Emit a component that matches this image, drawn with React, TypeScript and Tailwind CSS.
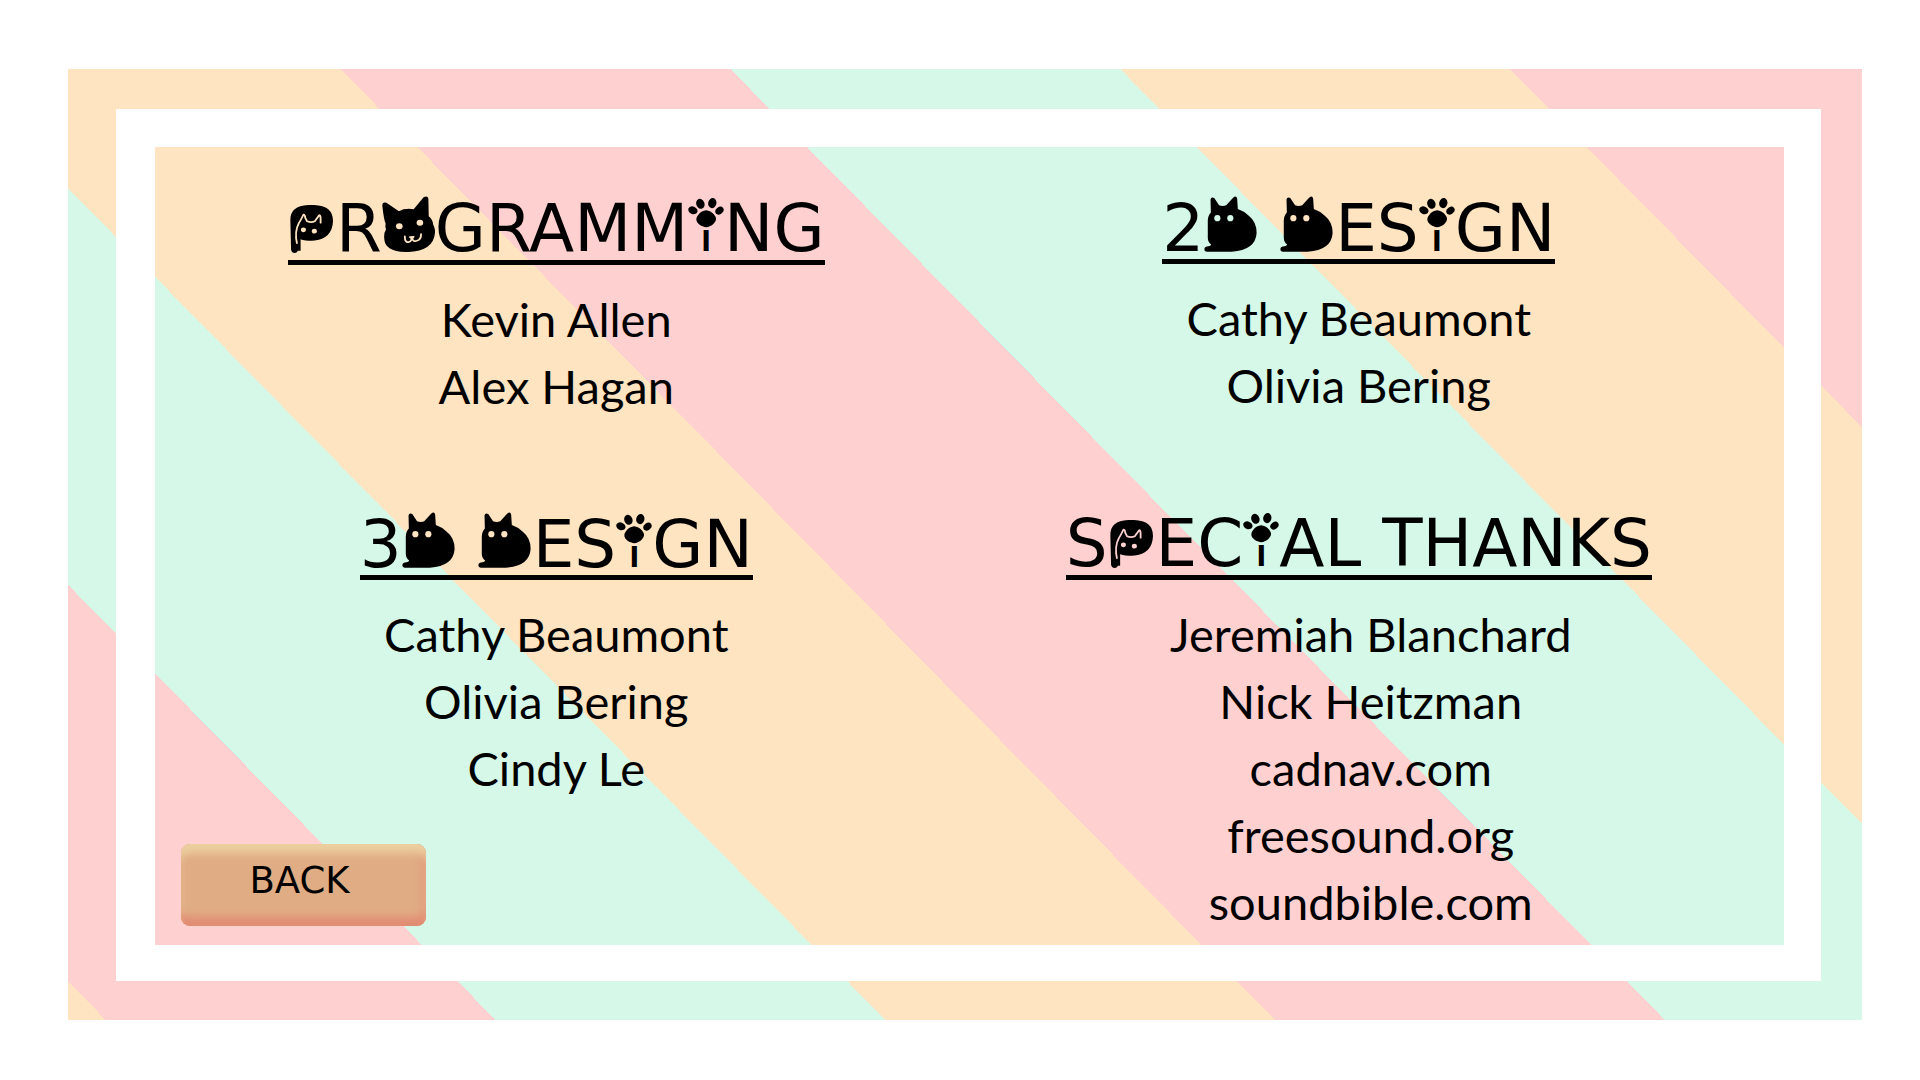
import type { ReactNode } from 'react';

const stripes =
  'bg-[repeating-linear-gradient(45.5deg,#fee4c0_0px,#fee4c0_27px,#fed0d0_27px,#fed0d0_305px,#d6f8e8_305px,#d6f8e8_583px,#fee4c0_583px,#fee4c0_834px)]';

type Tint = 'cream' | 'mint' | 'rose';

const tints: Record<Tint, string> = {
  cream: 'text-[#fee4c0]',
  mint: 'text-[#d6f8e8]',
  rose: 'text-[#fed0d0]',
};

/* Letter P with a cat face peeking out of its bowl */
function CatP({ tint }: { tint: Tint }) {
  return (
    <span className="relative inline-block w-[48px] pl-[2px]">
      <span className="text-[54px] leading-none">P</span>
      <svg
        aria-hidden="true"
        viewBox="0 0 118 141"
        preserveAspectRatio="none"
        className={`absolute bottom-[7px] left-[2px] h-[48px] w-[43px] ${tints[tint]}`}
      >
        <path
          d="M3 132 L1 45 Q0 2 50 0 H66 Q118 2 118 47 Q116 98 68 104 Q38 108 22 98 L22 132 Q20 141 13 141 Q5 141 3 132Z"
          fill="#000"
        />
        <path
          d="M19 112 Q12 78 24 54 Q31 42 37 28 Q41 28 42 38 L47 48 Q58 53 68 48 L80 30 Q83 29 84 38 V52"
          fill="none"
          stroke="currentColor"
          strokeWidth="5"
          strokeLinecap="round"
          strokeLinejoin="round"
        />
        <circle cx="37" cy="73" r="7" fill="currentColor" />
        <circle cx="67" cy="77" r="7" fill="currentColor" />
      </svg>
    </span>
  );
}

/* Letter O drawn as a cat's head */
function CatO({ tint }: { tint: Tint }) {
  return (
    <span className="relative inline-block w-[53px] text-center">
      <span className="text-[48px] leading-none">O</span>
      <svg
        aria-hidden="true"
        viewBox="0 0 144 165"
        preserveAspectRatio="none"
        className={`absolute bottom-[7px] left-0 h-[56px] w-[53px] ${tints[tint]}`}
      >
        <path
          d="M1 30 Q0 16 12 20 L46 45 Q62 35 86 39 L113 4 Q124 -3 126 8 L127 60 Q138 70 139 84 Q145 96 144 108 Q140 162 70 165 Q6 166 6 124 Q5 108 11 98 Q8 92 10 82 Q5 70 1 30Z"
          fill="#000"
        />
        <circle cx="47" cy="89" r="9" fill="currentColor" />
        <circle cx="103" cy="79" r="9" fill="currentColor" />
        <path
          d="M62 119 Q62 138 72 136 Q81 134 80 124 L76 121 L86 120 L82 125 Q85 136 95 132 Q107 128 106 112"
          fill="none"
          stroke="currentColor"
          strokeWidth="5"
          strokeLinecap="round"
          strokeLinejoin="round"
        />
      </svg>
    </span>
  );
}

/* Letter D drawn as a sitting cat */
function CatD({ tint }: { tint: Tint }) {
  return (
    <span className="relative inline-block w-[55px] text-center">
      <span className="text-[48px] leading-none">D</span>
      <svg
        aria-hidden="true"
        viewBox="0 0 153 164"
        className={`absolute bottom-[7px] left-0 h-[56px] w-[53px] ${tints[tint]}`}
      >
        <path
          d="M18 10 Q20 1 29 6 L43 27 Q54 31 64 27 L84 5 Q94 -3 96 8 L98 38 Q114 43 130 58 Q153 76 153 108 Q150 158 80 163 L8 163 Q0 163 0 155 Q1 147 12 147 Q18 147 20 142 Q9 135 10 118 L10 72 Q10 58 19 48 Z"
          fill="#000"
        />
        <circle cx="38" cy="65" r="9" fill="currentColor" />
        <circle cx="76" cy="65" r="9" fill="currentColor" />
      </svg>
    </span>
  );
}

/* Letter i dotted with a paw print */
function PawI() {
  return (
    <span className="relative inline-block w-[36px] text-center">
      <span className="font-[Lato,sans-serif] text-[40px] leading-none font-bold">i</span>
      <svg
        aria-hidden="true"
        viewBox="0 0 105 85"
        className="absolute bottom-[32px] left-0 h-[29px] w-[36px]"
      >
        <ellipse cx="14" cy="36" rx="14" ry="11" transform="rotate(25 14 36)" />
        <ellipse cx="36" cy="17" rx="12" ry="15" transform="rotate(-20 36 17)" />
        <ellipse cx="71" cy="15" rx="12" ry="15" transform="rotate(12 71 15)" />
        <ellipse cx="92" cy="37" rx="13" ry="10" transform="rotate(-35 92 37)" />
        <path d="M53 36 Q66 37 76 48 Q88 62 76 74 Q66 85 53 85 Q36 84 27 72 Q20 60 30 49 Q40 37 53 36Z" />
      </svg>
    </span>
  );
}

function Credits({
  title,
  names,
  listClass = '',
}: {
  title: ReactNode;
  names: string[];
  listClass?: string;
}) {
  return (
    <section className="flex flex-col items-center">
      <h2 className="border-b-[5px] border-black font-['DejaVu_Sans',sans-serif] text-[66px] leading-[60px] font-normal whitespace-nowrap">
        {title}
      </h2>
      <ul className={`mt-[21px] text-center text-[47px] leading-[67px] ${listClass}`}>
        {names.map((name) => (
          <li key={name}>{name}</li>
        ))}
      </ul>
    </section>
  );
}

export default function App() {
  return (
    <div className="flex min-h-screen bg-white pt-[69px] pr-[58px] pb-[60px] pl-[68px] font-[Lato,sans-serif] text-black">
      <div className={`flex flex-1 pt-10 pr-[41px] pb-[39px] pl-12 ${stripes}`}>
        <main className="grid flex-1 grid-cols-2 border-t-[38px] border-r-[37px] border-b-[36px] border-l-[39px] border-white pt-[52px] pr-6">
          <div className="flex flex-col justify-between">
            <div className="flex flex-col gap-[95px]">
              <Credits
                title={
                  <>
                    <CatP tint="cream" />R<CatO tint="cream" />
                    GRAMM
                    <PawI />
                    NG
                  </>
                }
                names={['Kevin Allen', 'Alex Hagan']}
              />
              <Credits
                title={
                  <>
                    3<CatD tint="cream" /> <CatD tint="cream" />
                    ES
                    <PawI />
                    GN
                  </>
                }
                names={['Cathy Beaumont', 'Olivia Bering', 'Cindy Le']}
              />
            </div>
            <button
              type="button"
              className="mb-[19px] ml-[26px] h-[82px] w-[245px] rounded-[9px] bg-[#e0ac84] pr-2 pb-[10px] font-['DejaVu_Sans',sans-serif] text-[37px] leading-none shadow-[inset_0_13px_9px_-4px_#ecd0a0,inset_0_-13px_9px_-4px_#e28c74,inset_-6px_0_9px_-2px_#e29c7c,inset_6px_0_9px_-2px_#e2b488]"
            >
              BACK
            </button>
          </div>
          <div className="flex flex-col gap-[95px]">
            <Credits
              title={
                <>
                  2<CatD tint="mint" /> <CatD tint="cream" />
                  ES
                  <PawI />
                  GN
                </>
              }
              names={['Cathy Beaumont', 'Olivia Bering']}
            />
            <Credits
              title={
                <>
                  S<CatP tint="rose" />
                  EC
                  <PawI />
                  AL THANKS
                </>
              }
              names={[
                'Jeremiah Blanchard',
                'Nick Heitzman',
                'cadnav.com',
                'freesound.org',
                'soundbible.com',
              ]}
              listClass="pl-6"
            />
          </div>
        </main>
      </div>
    </div>
  );
}
